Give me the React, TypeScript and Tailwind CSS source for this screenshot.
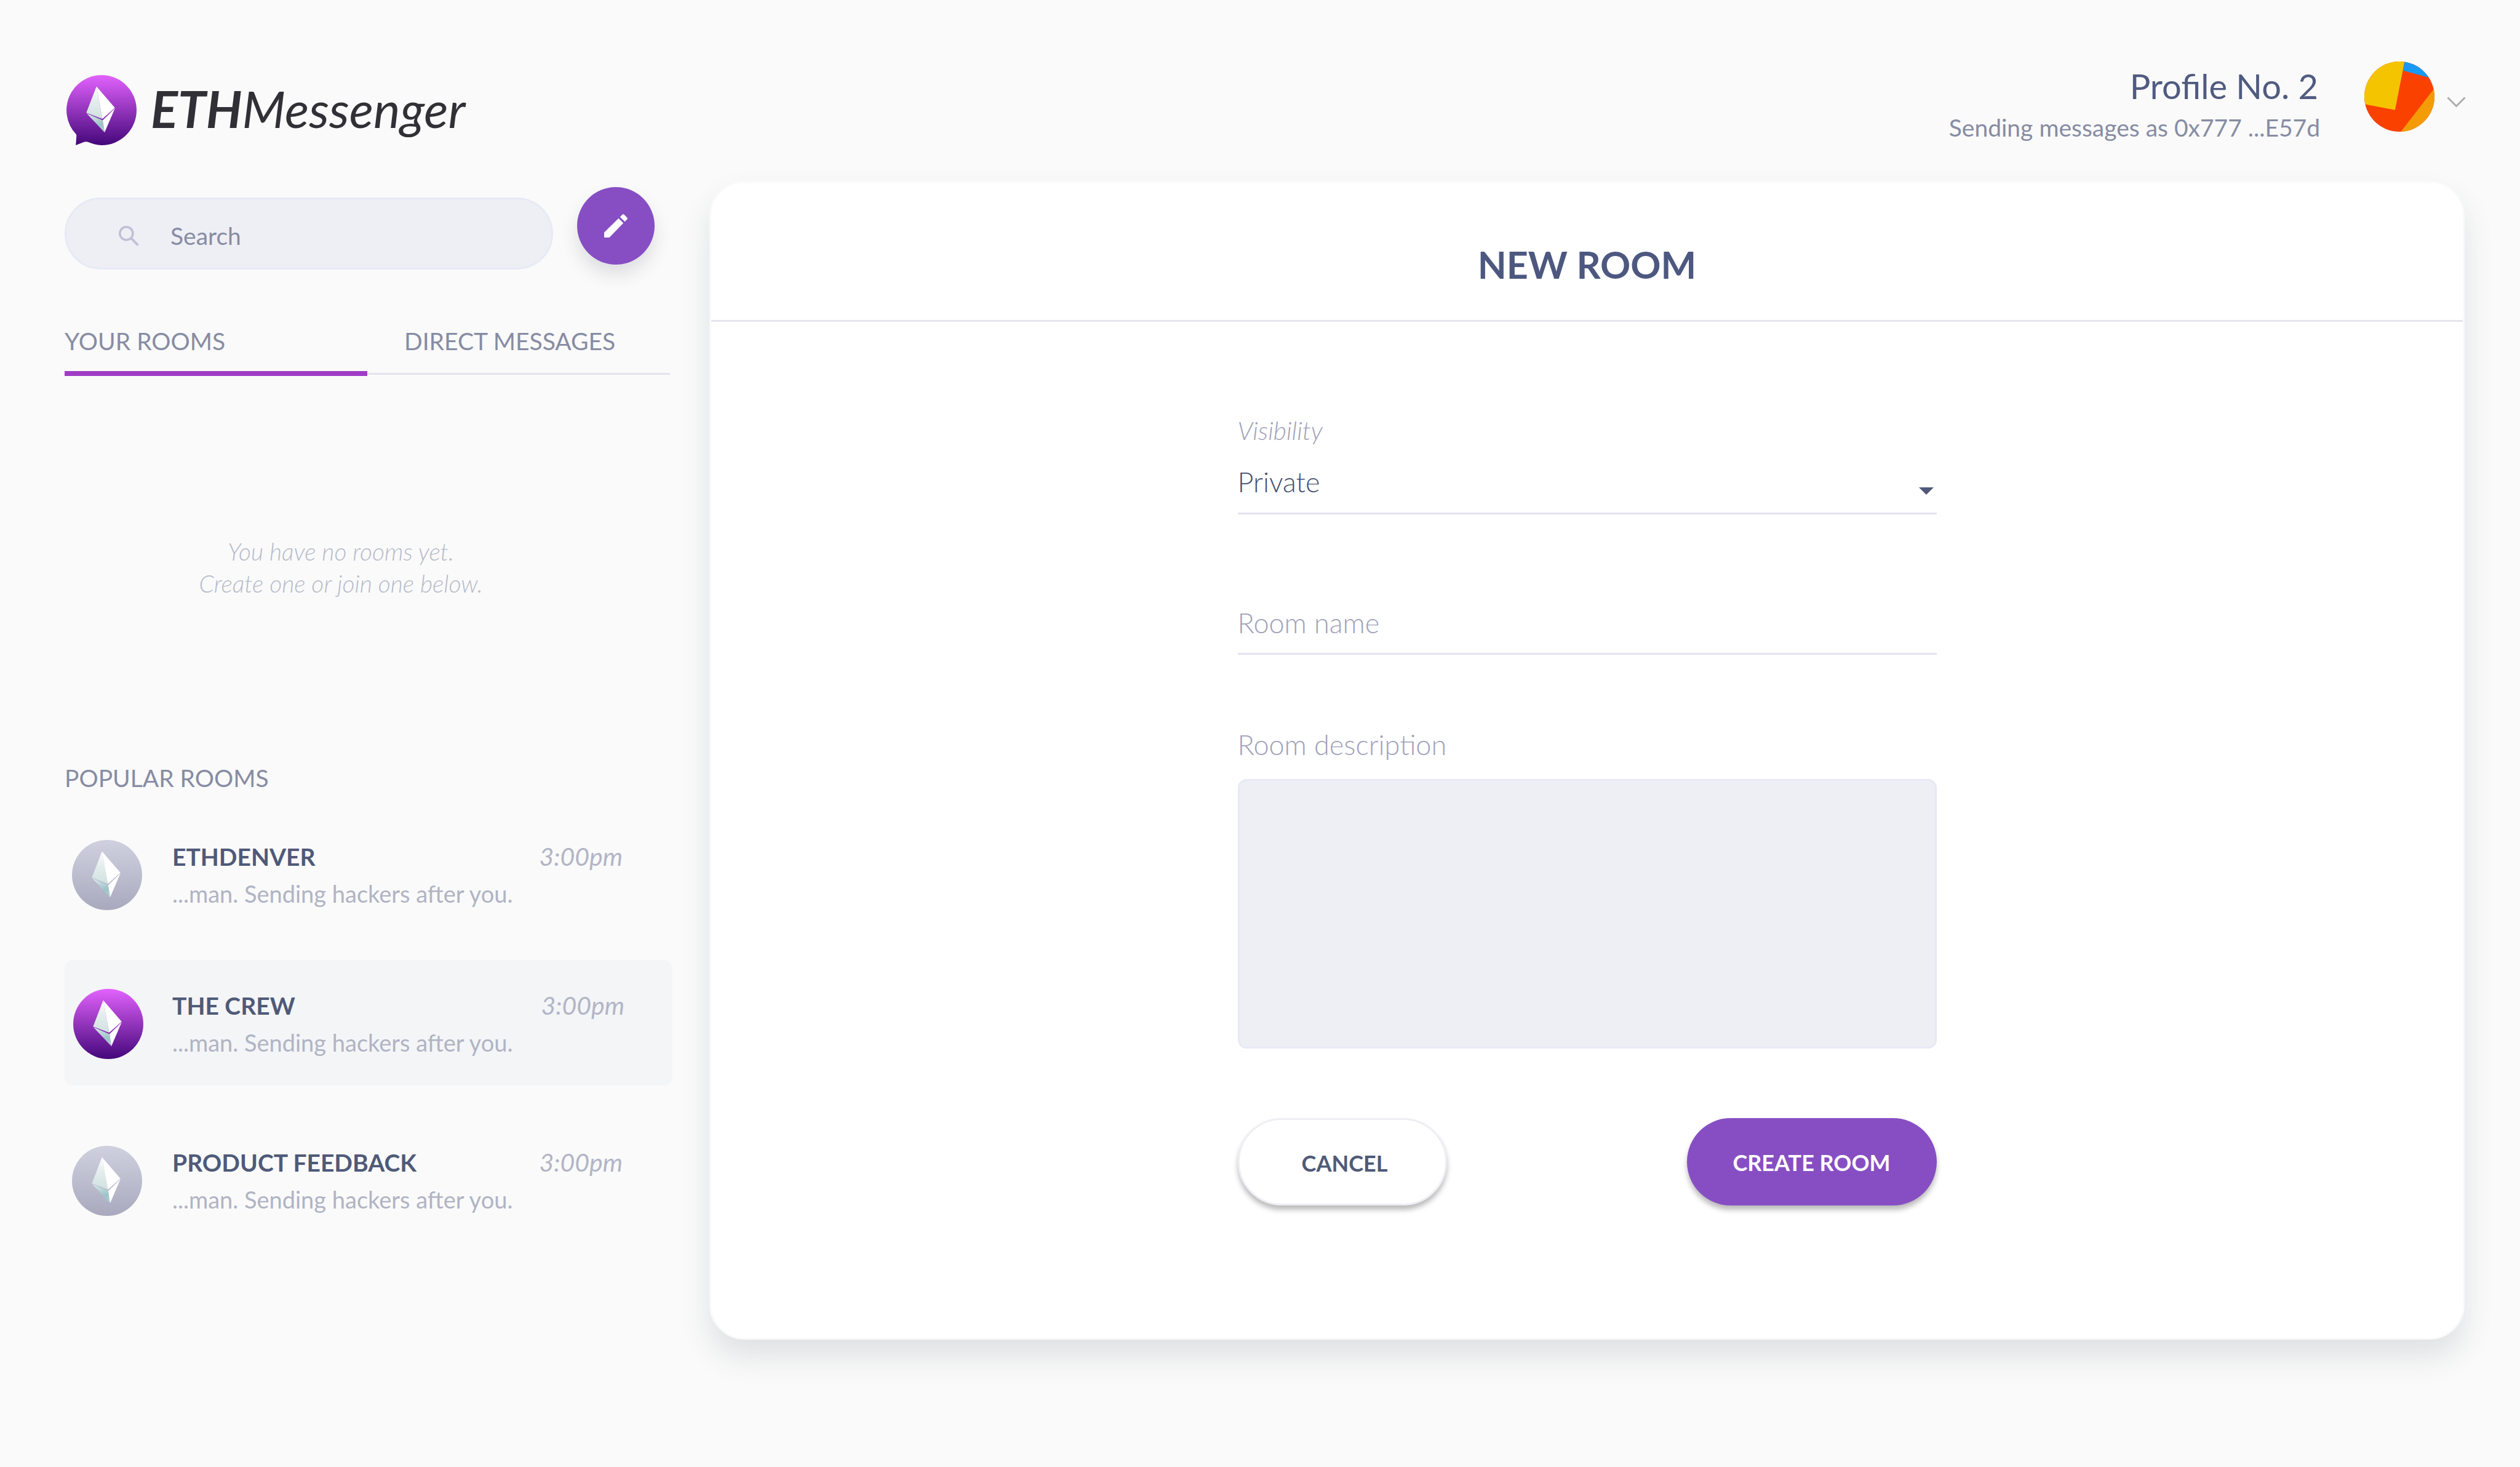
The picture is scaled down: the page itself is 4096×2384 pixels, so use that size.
import React, { useId, useState } from "react";

type Room = { name: string; preview: string; time: string; active: boolean };

const rooms: Room[] = [
  { name: "ETHDENVER", preview: "...man. Sending hackers after you.", time: "3:00pm", active: false },
  { name: "THE CREW", preview: "...man. Sending hackers after you.", time: "3:00pm", active: true },
  { name: "PRODUCT FEEDBACK", preview: "...man. Sending hackers after you.", time: "3:00pm", active: false },
];

function EthBadge({ tone, bubble = false }: { tone: "purple" | "grey"; bubble?: boolean }) {
  const id = useId();
  const purple = tone === "purple";
  return (
    <svg viewBox="0 0 160 160" className="size-[114px] shrink-0" aria-hidden="true">
      <defs>
        <linearGradient id={`${id}bg`} x1="0.5" y1="0" x2="0.5" y2="1">
          <stop offset="0" stopColor={purple ? "#e262fd" : "#cfd1df"} />
          <stop offset="1" stopColor={purple ? "#44077a" : "#a9a9be"} />
        </linearGradient>
        <linearGradient id={`${id}top`} x1="0" y1="0" x2="0" y2="1">
          <stop offset="0" stopColor="#ffffff" />
          <stop offset="0.4" stopColor="#e6eeee" />
          <stop offset="1" stopColor="#d0e1e1" />
        </linearGradient>
        <linearGradient id={`${id}low`} x1="0" y1="0" x2="0.3" y2="1">
          <stop offset="0.1" stopColor="#d6e5e5" />
          <stop offset="0.75" stopColor="#9cc3c8" />
          <stop offset="1" stopColor="#a9cccf" />
        </linearGradient>
      </defs>
      {bubble ? (
        <path
          d="M80 0a80 80 0 1 1 0 160c-11 0-20-3-29-6.500-4-1.800-7-2.300-11-.8L21.300 160l1.600-21.500c.1-2.300-.6-3.300-2.200-5A80 80 0 0 1 80 0z"
          fill={`url(#${id}bg)`}
        />
      ) : (
        <circle cx="80" cy="80" r="80" fill={`url(#${id}bg)`} />
      )}
      <path d="M68.500 26 45.300 86 82 100z" fill={`url(#${id}top)`} />
      <path d="M68.500 26 82 100l28.500-25.300z" fill="#ffffff" />
      <path d="M46 87.300 82.700 103.300 87 131z" fill={`url(#${id}low)`} />
      <path d="M110.500 76 82.700 103.300 87 131z" fill="#ffffff" />
    </svg>
  );
}

function SearchIcon() {
  return (
    <svg viewBox="0 0 139 139" className="size-[33px] shrink-0" aria-hidden="true">
      <circle cx="52" cy="52" r="44.500" fill="none" stroke="#c0c0d5" strokeWidth="15" />
      <path d="M84 84l49 49" stroke="#c0c0d5" strokeWidth="16" />
    </svg>
  );
}

function PencilIcon() {
  return (
    <svg viewBox="0 0 162 162" className="size-[38px]" fill="#ffffff" aria-hidden="true">
      <path d="M0 127 100 29l33 33L36 162H0z" />
      <path d="M110 19 126 3q6-6 12 0l21 21q6 6 0 12l-16 16z" />
    </svg>
  );
}

function ProfilePicture() {
  const id = useId();
  return (
    <svg viewBox="0 0 480 480" className="size-[114px] shrink-0" role="img" aria-label="Profile picture">
      <defs>
        <clipPath id={id}>
          <circle cx="240" cy="240" r="240" />
        </clipPath>
      </defs>
      <g clipPath={`url(#${id})`}>
        <rect width="480" height="480" fill="#fa4100" />
        <path d="M0 0h275L210 332 0 292z" fill="#f5c400" />
        <path d="M275 0 266 62 480 120V0z" fill="#1999f3" />
        <path d="M480 182 250 480h230z" fill="#f39c05" />
      </g>
    </svg>
  );
}

function RoomRow({ room }: { room: Room }) {
  return (
    <li className={room.active ? "mb-[13px]" : ""}>
      <a
        href="#room"
        className={`flex items-center rounded-[14px] pt-[44px] pb-[40px] ${
          room.active ? "gap-[47px] bg-[#f4f5f7] pr-[78px] pl-[14px]" : "gap-[49px] pr-[81px] pl-[12px]"
        }`}
      >
        <EthBadge tone={room.active ? "purple" : "grey"} />
        <span className="flex min-w-0 flex-1 flex-col">
          <span className="flex items-center justify-between leading-[60px]">
            <span className="text-[39px] font-bold text-[#4f5a78]">{room.name}</span>
            <span className="text-[41px] text-[#b2b5c6] italic">{room.time}</span>
          </span>
          <span className="text-[38px] leading-[60px] text-[#b0b4c4]">{room.preview}</span>
        </span>
      </a>
    </li>
  );
}

export default function App() {
  const [visibility, setVisibility] = useState("Private");
  return (
    <div className="min-h-screen bg-[#fafafa] pr-[88px] pl-[105px] font-['Lato','Liberation_Sans',sans-serif]">
      <header className="flex h-[294px] items-start justify-between pt-[100px]">
        <a href="#home" className="mt-[22px] flex items-center gap-[23px] pl-[3px]">
          <EthBadge tone="purple" bubble />
          <span className="pb-[6px] text-[82px] leading-[96px] text-[#303036] italic">
            <b className="font-bold">ETH</b>
            <span>Messenger</span>
          </span>
        </a>
        <div className="flex items-start">
          <div className="mr-[72px] text-right">
            <p className="pr-[3px] text-[56px] leading-[80px] text-[#505b80]">Profile No. 2</p>
            <p className="text-[39px] leading-[54px] text-[#878ca3]">Sending messages as 0x777 ...E57d</p>
          </div>
          <button type="button" aria-label="Switch profile" className="flex items-center gap-[20px]">
            <ProfilePicture />
            <svg viewBox="0 0 30 18" className="mt-[18px] h-[18px] w-[31px]" aria-hidden="true">
              <path d="M1 1.500 15 15.500 29 1.500" fill="none" stroke="#adadad" strokeWidth="3" />
            </svg>
          </button>
        </div>
      </header>

      <div className="flex items-start gap-[60px] pr-[2px]">
        <aside className="w-[988px] shrink-0 pt-[10px]">
          <div className="flex items-start gap-[39px]">
            <label className="mt-[17px] flex h-[117px] w-[794px] items-center rounded-full border-3 border-[#e7eaf5] bg-[#eeeff5] pt-[8px] pl-[85px]">
              <SearchIcon />
              <input
                type="search"
                aria-label="Search"
                placeholder="Search"
                className="ml-[51px] min-w-0 flex-1 bg-transparent text-[39px] text-[#878ca3] outline-none placeholder:text-[#878ca3]"
              />
            </label>
            <button
              type="button"
              aria-label="New message"
              className="flex size-[126px] items-center justify-center rounded-full bg-[#874ec3] shadow-[0_16px_28px_rgba(40,40,60,0.13)]"
            >
              <PencilIcon />
            </button>
          </div>

          <nav className="mt-[92px] flex w-[984px] items-start text-[39px] leading-[48px] text-[#878ca3]">
            <button type="button" className="w-1/2 border-b-8 border-[#a03cc5] pb-[25px] text-left">
              YOUR ROOMS
            </button>
            <button type="button" className="w-1/2 border-b-3 border-[#e4e4ee] pb-[28px] pl-[60px] text-left">
              DIRECT MESSAGES
            </button>
          </nav>

          <p className="mt-[259px] pr-[90px] text-center text-[39px] leading-[52px] font-light text-[#b6bacb] italic">
            You have no rooms yet.
            <br />
            Create one or join one below.
          </p>

          <h2 className="mt-[266px] text-[39px] leading-[48px] text-[#878ca3]">POPULAR ROOMS</h2>
          <ul className="mt-[30px] flex flex-col gap-[38px]">
            {rooms.map((room) => (
              <RoomRow key={room.name} room={room} />
            ))}
          </ul>
        </aside>

        <main className="min-w-0 flex-1 rounded-[57px] border-3 border-[#fafafa] bg-white shadow-[0_28px_48px_rgba(50,60,80,0.13)]">
          <h1 className="border-b-3 border-[#e5e6ee] pt-[95px] pb-[52px] text-center text-[61px] leading-[76px] font-bold text-[#4d5880]">
            NEW ROOM
          </h1>
          <form className="mx-auto flex w-[1136px] flex-col pt-[155px] pb-[215px]" onSubmit={(e) => e.preventDefault()}>
            <label htmlFor="visibility" className="text-[41px] leading-[44px] font-light text-[#a0a1b8] italic">
              Visibility
            </label>
            <div className="relative">
              <select
                id="visibility"
                value={visibility}
                onChange={(e) => setVisibility(e.target.value)}
                className="h-[114px] w-full appearance-none border-b-3 border-[#e4e3f0] bg-transparent pt-[12px] text-[45px] font-light text-[#454f6e] outline-none"
              >
                <option>Private</option>
                <option>Public</option>
              </select>
              <svg
                viewBox="0 0 24 12"
                className="pointer-events-none absolute right-[5px] bottom-[32px] h-[12px] w-[24px]"
                aria-hidden="true"
              >
                <path d="M0 0h24L12 12z" fill="#4f5a78" />
              </svg>
            </div>
            <input
              type="text"
              aria-label="Room name"
              placeholder="Room name"
              className="mt-[114px] h-[114px] border-b-3 border-[#e4e3f0] bg-transparent pt-[12px] text-[45px] font-light text-[#454f6e] outline-none placeholder:text-[#a0a1b8]"
            />
            <label htmlFor="description" className="mt-[118px] text-[45px] leading-[56px] font-light text-[#a0a1b8]">
              Room description
            </label>
            <textarea
              id="description"
              className="mt-[28px] h-[438px] resize-none rounded-[14px] border-3 border-[#e7eaf5] bg-[#eeeff5] p-8 text-[45px] font-light text-[#454f6e] outline-none"
            />
            <div className="mt-[113px] flex justify-between text-[36px] font-bold">
              <button
                type="button"
                className="h-[142px] w-[340px] rounded-full border-3 border-[#eeeef5] bg-white pt-[4px] pl-[8px] text-[#4f5a78] shadow-[0_7px_9px_rgba(0,0,0,0.27)]"
              >
                CANCEL
              </button>
              <button
                type="submit"
                className="h-[142px] w-[406px] rounded-full bg-[#874ec3] pt-[2px] text-white shadow-[0_7px_9px_rgba(0,0,0,0.27)]"
              >
                CREATE ROOM
              </button>
            </div>
          </form>
        </main>
      </div>
    </div>
  );
}
